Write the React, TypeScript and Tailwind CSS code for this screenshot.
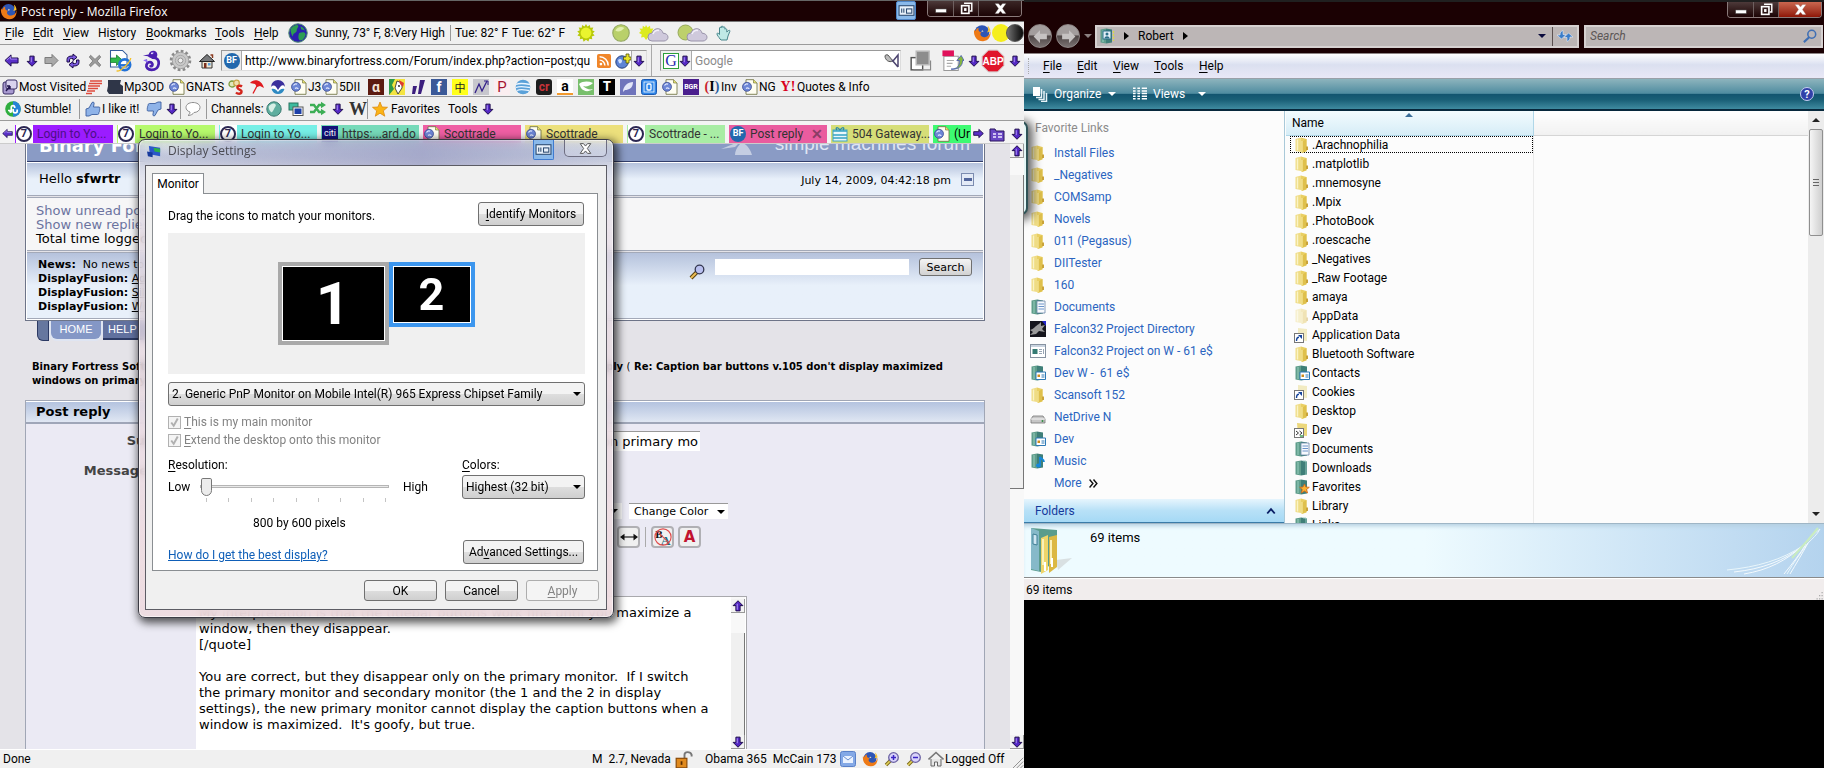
import { useState } from "react";
import type { ReactNode } from "react";

type IconProps = { size?: number; className?: string };

function Svg({ size = 16, className = "", children }: IconProps & { children: ReactNode }) {
  return (
    <svg width={size} height={size} viewBox="0 0 16 16" fill="none" className={`shrink-0 ${className}`} aria-hidden="true">
      {children}
    </svg>
  );
}

// "&File" underlines the F, like a Windows menu caption
function Caption({ text }: { text: string }) {
  const at = text.indexOf("&");
  if (at < 0 || text[at + 1] === " ") return <>{text}</>;
  return (
    <>
      {text.slice(0, at)}
      <span className="underline underline-offset-2">{text[at + 1]}</span>
      {text.slice(at + 2)}
    </>
  );
}

const LeftArrow = ({ size = 15 }: IconProps) => (
  <Svg size={size}>
    <path d="M1 8l6.5-6v3.300H15v5.400H7.500V14z" fill="#5a30c8" stroke="#1c0a4a" />
    <path d="M3 7.500L7 4v2.500h7" stroke="#a58af0" />
  </Svg>
);
const RightArrow = ({ size = 12 }: IconProps) => (
  <Svg size={size}>
    <path d="M15 8L8.500 2v3.300H1v5.400h7.500V14z" fill="#5a30c8" stroke="#1c0a4a" strokeWidth="1.300" />
  </Svg>
);
const GreyArrow = () => (
  <Svg size={15}>
    <path d="M15 8L8.500 1.500v3.300H1v6.400h7.500v3.300z" fill="#a9a9a9" stroke="#777" />
  </Svg>
);
const DownArrow = ({ size = 12 }: IconProps) => (
  <Svg size={size}>
    <path d="M8 15L1.500 8.500h3.700V1.500h5.600v7h3.700z" fill="#5428c4" stroke="#1c0a4a" strokeWidth="1.300" />
    <path d="M7 3v6.500" stroke="#a58af0" strokeWidth="1.500" />
  </Svg>
);
const UpArrow = ({ size = 12 }: IconProps) => (
  <Svg size={size}>
    <path d="M8 1L1.500 7.500h3.700v7h5.600v-7h3.700z" fill="#5428c4" stroke="#1c0a4a" strokeWidth="1.300" />
    <path d="M7 5v8" stroke="#a58af0" strokeWidth="1.500" />
  </Svg>
);
const Reload = () => (
  <Svg>
    <path d="M2 9V6.500C2 4 4 3 7 3h1V1l4 3.300L8 7.500V5.500H6.500C5 5.500 4.500 6 4.500 7v2z" fill="#7b5be0" stroke="#1c0a4a" />
    <path d="M14 7v2.500c0 2.500-2 3.500-5 3.500H8v2l-4-3.300L8 8.500v2h1.500c1.500 0 2-.5 2-1.500V7z" fill="#7b5be0" stroke="#1c0a4a" />
  </Svg>
);
const StopX = () => (
  <Svg size={14}>
    <path d="M3 1.500l5 4.700 5-4.700 1.500 2L10.500 8l4 4.500-1.500 2-5-4.700-5 4.700-1.500-2L5.500 8l-4-4.500z" fill="#9b9b9b" stroke="#7d7d7d" />
  </Svg>
);
const IeTab = () => (
  <Svg size={24}>
    <path d="M1 1h8l3 3v8H1z" fill="#fff" stroke="#345c9c" strokeWidth=".7" />
    <path d="M1 6h4V4l4 3.500L5 11V9H1z" fill="#2fb84a" stroke="#177a2b" strokeWidth=".5" />
    <circle cx="10.500" cy="10.500" r="3.600" stroke="#2272d8" strokeWidth="1.800" />
    <path d="M7 10.700h7" stroke="#2272d8" strokeWidth="1.300" />
    <path d="M5 14.500c2 1 9-5 9.500-8.500" stroke="#f3c12b" strokeWidth=".9" />
  </Svg>
);
const Seahorse = () => (
  <Svg size={23}>
    <path d="M2 4.500l4-.7C6.500 1 10 .3 11.500 2.200c1.200 1.800.3 3.600-1 4.300C9 7.500 6 5.500 5.500 5z" fill="#4a1fb0" />
    <path
      d="M9 6c3 0 4.300 2 4 4.300-.4 2.700-2.500 4.200-5 4.200s-4-1.700-3.500-3.500 2.600-2.500 3.700-1.300.2 2.400-.8 2.200"
      stroke="#4a1fb0"
      strokeWidth="1.900"
      strokeLinecap="round"
    />
    <path d="M5 7.500l-1.500.5 2 1M8.500 2.800l1-.3" stroke="#8c6af0" />
    <circle cx="8.300" cy="3" r=".6" fill="#fff" />
  </Svg>
);
const Gear = () => (
  <Svg size={23}>
    <circle cx="8" cy="8" r="6.600" stroke="#8a8a8a" strokeWidth="1.800" strokeDasharray="1.900 1.550" />
    <circle cx="8" cy="8" r="5.700" fill="#c9c9c9" stroke="#909090" strokeWidth=".5" />
    <circle cx="8" cy="8" r="1.700" fill="#eee" stroke="#888" strokeWidth=".6" />
    <circle cx="8" cy="8" r="3.600" stroke="#a5a5a5" strokeWidth=".6" />
  </Svg>
);
const Home = () => (
  <Svg>
    <path d="M3 8h10v7H3z" fill="#efe6d2" stroke="#333" />
    <path d="M0.500 8.500L8 1.500l7.500 7z" fill="#77797c" stroke="#222" />
    <path d="M11.500 2h2v3" stroke="#8a3b20" strokeWidth="1.500" />
    <path d="M5 10h2.500v5H5z" fill="#7a2f1d" />
    <path d="M9 10h2.500v2.500H9z" fill="#5aa0dd" />
  </Svg>
);
const Globe = ({ size = 20 }: IconProps) => (
  <Svg size={size}>
    <circle cx="8" cy="8" r="7.400" fill="#2a1fae" stroke="#4f8f70" strokeWidth=".8" />
    <path d="M2 5c2-3 5-4 6-3s-1 2-1 4-3 2-3 4-2-2-2-5zM9 8c2-1 5-1 5 1s-2 5-4 5-2-4-1-6z" fill="#2d9d54" />
    <path d="M10 2.500c2 .5 3 2 3.500 3.500l-3-1z" fill="#2d9d54" />
  </Svg>
);
const TealGlobe = () => (
  <Svg>
    <circle cx="8" cy="8" r="7.200" fill="#5fae9f" stroke="#3a7a70" />
    <path d="M3 5c2-2 4-3 6-2s0 3-1 5-2 4-3 3-3-4-2-6z" fill="#d7efe6" />
  </Svg>
);
const Firefox = ({ size = 17 }: IconProps) => (
  <Svg size={size}>
    <circle cx="8" cy="7.500" r="6.500" fill="#2d55b5" />
    <path d="M1 5c-1 6 3 10.500 8 10.300S16 11 15.500 6.500c-.5 3-2 5-5 5.200C7 12 5.500 9 7.500 7.200 5 7 4.500 5 5 3.500 3.500 3.500 2.300 5.500 2 6.500z" fill="#ee7a16" />
    <path d="M15.500 6.500c0-2-1-4-2.500-5 .8 2 .8 4-.5 6z" fill="#f9c22d" />
    <path d="M7.500 7.200l2-.7L8 5.500z" fill="#f8e3c0" />
  </Svg>
);
const Sun = ({ size = 18 }: IconProps) => (
  <Svg size={size}>
    <path
      d="M8 0l1.300 2.300L11.500.8l.3 2.600 2.700-.2-1 2.400 2.300 1.100L14 8.300l1.600 2-2.500.7.500 2.600-2.600-.4-.9 2.400L8 14l-2.100 1.700-.9-2.500-2.600.4.500-2.600L.4 10.300 2 8.300.2 6.700l2.300-1.100-1-2.400 2.700.2.300-2.600 2.200 1.500z"
      fill="#b7c90a"
    />
    <circle cx="8" cy="8" r="4.800" fill="#eaf52e" />
  </Svg>
);
const PaleDisc = () => (
  <Svg size={18}>
    <circle cx="8" cy="8" r="7.300" fill="#b9d06a" stroke="#94a860" />
    <path d="M3 6c1-3 5-4.500 8-2.500-3 3-5 4-8 2.500z" fill="#e2efb0" />
  </Svg>
);
function CloudyIcon({ spiky }: { spiky?: boolean }) {
  return (
    <svg width="31" height="18" viewBox="0 0 31 18" fill="none" aria-hidden="true">
      {spiky ? (
        <path d="M8 1l1.500 2.500L12 1.800l.3 3 3-.2-1.300 3L16 9l-3 1 1 3-3-.5-3 3.500-2-3-3 .5.800-3L1 9l2-2-1.500-2.500 3 .2.300-3 2.200 1.500z" fill="#dcea1e" />
      ) : (
        <circle cx="8.500" cy="8.500" r="7.500" fill="#bdd06c" stroke="#97aa5c" />
      )}
      <path d="M14 17a4 4 0 010-8c1-3 3.500-4.500 6-4.300 3 .2 4.500 2.300 5 4.500 3 0 5 1.800 5 4s-2 3.800-4 3.800z" fill="#cfc9dc" stroke="#9a94ab" />
      <path d="M15 10c1-3 4-4 6-3.500" stroke="#f3f0fa" strokeWidth="1.500" />
    </svg>
  );
}
const Hand = () => (
  <Svg>
    <path d="M4 14c-1-2-3-3.500-3-5s1.500-1 2.500.5V3c0-1 1.700-1 1.700 0V2c0-1.200 1.800-1.200 1.800 0v.5c.2-1 1.900-1 1.900.2v1.500c.4-.8 1.900-.6 1.900.4V7l1.700-1.500c1-.7 1.800.2 1.300 1L12 11l-1 4H5z" fill="#bfe9e6" stroke="#48868c" />
  </Svg>
);

const PageGlobe = () => (
  <Svg>
    <path d="M4 .7h7.500L15 4v11.300H4z" fill="#fffef2" stroke="#77794a" strokeWidth=".9" />
    <path d="M11.500.7V4H15" fill="#e9e36d" stroke="#77794a" strokeWidth=".7" />
    <circle cx="5" cy="7.800" r="4.500" fill="#6d86d6" stroke="#31418a" strokeWidth=".7" />
    <path d="M2.500 6.500c1-1.500 2.500-2 3.500-1.200M4 9.500c1.500-1 3-.5 3 .5" stroke="#e6ecff" strokeWidth="1.200" />
  </Svg>
);
const MostVisited = () => (
  <Svg>
    <rect x="1" y="3" width="11" height="12" rx="2" fill="#a89ad0" stroke="#3a2e66" />
    <rect x="4" y="1" width="11" height="9" rx="2" fill="#d9d3ee" stroke="#3a2e66" />
    <path d="M4 12l4-5m0 0H5m3 0v3" stroke="#22164f" strokeWidth="1.400" />
  </Svg>
);
const RedWaves = () => (
  <Svg>
    <path d="M4 2h12M3 4.500h13M2 7h12M2 9.500h10M1 12h8M0 14.500h6" stroke="#de4a3c" strokeWidth="1.300" />
  </Svg>
);
const DarkBlob = () => (
  <Svg>
    <path d="M1 1h13l-1 4 3 2v8H2l-2-3 1-5z" fill="#2f3648" />
  </Svg>
);
const Scottish = () => (
  <Svg>
    <circle cx="4" cy="5" r="3" fill="#dfe8bd" stroke="#7d9c3c" strokeWidth="1.300" />
    <circle cx="8.500" cy="4" r="2.800" fill="#f0dfae" stroke="#c9a64a" strokeWidth="1.300" />
    <path d="M14 7.500c-2-1.500-5-.5-4.500 1.500s4.500 1.500 4 4-4 2-5.500.5" stroke="#d3251c" strokeWidth="2.400" />
  </Svg>
);
const Umbrella = () => (
  <Svg>
    <path d="M1 4C5-1 13 1 15 9l-4-2-3 1-2-3z" fill="#e01a1f" />
    <path d="M8.500 6L4 14.500" stroke="#e01a1f" strokeWidth="1.300" />
  </Svg>
);
const Noaa = () => (
  <Svg>
    <circle cx="8" cy="8" r="7" fill="#fff" />
    <path d="M1 8A7 7 0 018 1a7 7 0 017 7c-2-3-4-2-7 3-2-4-4-6-7-3z" fill="#3b2f9c" />
    <path d="M1.500 10c3-1 5 1 6.500 3 1.500-2 3.500-4 6.500-3A7 7 0 018 15a7 7 0 01-6.500-5z" fill="#2f8ac2" />
  </Svg>
);
const Face = () => (
  <Svg>
    <rect width="16" height="16" fill="#f4e441" />
    <path d="M0 0h6L3 6l2 4-5 6z" fill="#2f9a48" />
    <path d="M8 2l5 2v5l-4 6-3-6z" fill="#fff" stroke="#222" strokeWidth=".8" />
    <path d="M10 1l5 3-1 4-3-3z" fill="#de3b2f" />
    <circle cx="10" cy="7" r=".9" fill="#111" />
  </Svg>
);
const Slashes = () => (
  <Svg>
    <path d="M3 7h4L5 15H2zM10 1h5l-4 14H8z" fill="#3b1e7d" />
  </Svg>
);
const Spark = () => (
  <Svg>
    <rect width="16" height="16" fill="#c7c7cd" />
    <path d="M2 14L6 5l3 7 5-10" stroke="#33208a" strokeWidth="1.300" />
    <path d="M11 2h4v4" stroke="#33208a" />
  </Svg>
);
const Stripes = () => (
  <Svg>
    <circle cx="8" cy="8" r="7.300" fill="#5aa1d8" />
    <path d="M1 5.500c4-2 9-1 14 0M1 8.500c5-2 9-.5 14 0M2 11.500c4-2 8-.5 12 0" stroke="#eaf5ff" strokeWidth="1.300" />
  </Svg>
);
const GreenLeaf = () => (
  <Svg>
    <rect width="16" height="16" fill="#78bf6c" />
    <path d="M1 5c4-3 9-3 14-1-3 3-7 4-10 3 3 3 7 4 10 3-4 3-9 3-12-1z" fill="#fff" />
  </Svg>
);
const Feather = () => (
  <Svg>
    <rect width="16" height="16" fill="#6f74bb" />
    <path d="M3 13C3 7 8 3 13 3c0 6-4 8-8 8z" fill="#e3e6f8" />
  </Svg>
);
const BlueO = () => (
  <Svg>
    <rect x=".5" y=".5" width="15" height="15" rx="2" fill="#2f86e8" stroke="#1a5ab4" />
    <rect x="3" y="3" width="10" height="10" stroke="#fff" strokeWidth=".8" />
    <rect x="6" y="5" width="4" height="6" rx="1" stroke="#fff" strokeWidth="1.300" />
  </Svg>
);

function Letter({ text, className }: { text: string; className: string }) {
  return <span className={`inline-flex h-4 w-4 shrink-0 items-center justify-center leading-none ${className}`}>{text}</span>;
}

const BinaryFortress = () => (
  <Letter text="BF" className="rounded-full bg-[#2268ad] text-[9px] font-bold text-white" />
);
const Seven = () => (
  <span className="flex h-[18px] w-[17px] shrink-0 items-center bg-white">
    <Letter text="7" className="rounded-full border-2 border-[#2c2752] bg-white text-[11px] font-bold text-[#2c2752]" />
  </span>
);
const Gift = () => (
  <Svg>
    <rect x="1" y="4" width="14" height="11" fill="#e9f7fb" stroke="#3da4bf" />
    <path d="M1 5h14M1 9h14M1 12h14" stroke="#35a2c4" strokeWidth="1.600" />
    <path d="M8 4C5 0 3 2 5 4M8 4c3-4 5-2 3 0" stroke="#2a8aa8" strokeWidth="1.300" />
  </Svg>
);
const Stumble = () => (
  <Svg>
    <circle cx="8" cy="8" r="7.800" fill="#2fae3f" />
    <path d="M8 .2a7.800 7.800 0 010 15.600z" fill="#2683d8" />
    <path d="M3 9.500h2v1c0 .8 1.300.8 1.300 0V6.300C6.300 4 9.700 4 9.700 6.300V7M8.200 8v2c0 2.500 4 2.500 4 0V8.500" stroke="#fff" strokeWidth="1.700" />
  </Svg>
);
function Thumb({ down }: { down?: boolean }) {
  return (
    <Svg className={down ? "rotate-180" : ""}>
      <path d="M1 8l3-1 3-5.500c1.500-1 2.500 0 2 1.500L8.500 6H14c1.300.3 1.300 1.700.3 2 .8.500.7 1.600-.2 1.900.6.600.4 1.600-.4 1.800.4.900-.2 1.800-1.200 1.800H7L4 15l-3 0z" fill="#8fb3e8" stroke="#3c5f9f" strokeWidth=".9" />
    </Svg>
  );
}
const Bubble = () => (
  <Svg>
    <path d="M8 1.500c4 0 7 2 7 5s-3 5-6 5c-1 1.500-3 3-6 3 1.500-1 2-2.500 2-3.500-2.500-.8-4-2.500-4-4.500 0-3 3-5 7-5z" fill="#fff" stroke="#8e8e8e" />
  </Svg>
);
const Photos = () => (
  <Svg>
    <rect x="1" y="2" width="9" height="7" fill="#3dbb9e" stroke="#28735f" />
    <rect x="5" y="6" width="10" height="8.500" fill="#fff" stroke="#555" />
    <rect x="6.500" y="7.500" width="7" height="5.500" fill="#1d3fa8" />
  </Svg>
);
const Shuffle = () => (
  <Svg>
    <path d="M0 4h4l5 7h3M0 11h4l5-7h3" stroke="#3cae55" strokeWidth="2.400" />
    <path d="M11 .8L16 4l-5 3.300zM11 7.800l5 3.300-5 3.200z" fill="#3cae55" />
  </Svg>
);
const Star = ({ size = 16 }: IconProps) => (
  <Svg size={size}>
    <path d="M8 1l2 5 5.500.3-4.200 3.500 1.500 5.400L8 12.200l-4.700 3 1.400-5.400L.5 6.300 6 6z" fill="#fbb416" stroke="#dd8a10" strokeWidth=".8" />
  </Svg>
);
const Rss = () => (
  <Svg size={14}>
    <rect width="16" height="16" rx="2" fill="#f0862a" />
    <circle cx="4.500" cy="11.500" r="1.500" fill="#fff" />
    <path d="M3 7a6 6 0 016 6M3 3.200A9.800 9.800 0 0112.800 13" stroke="#fff" strokeWidth="1.700" />
  </Svg>
);
const GlobePlus = () => (
  <Svg>
    <circle cx="7" cy="9" r="6.200" fill="#5d84d6" stroke="#26407c" />
    <path d="M3 7c2-2 4-1 4 1s-2 3-3 2z" fill="#cfe0ff" />
    <path d="M11 1h3v3h2v3h-2v3h-3V7H8.500V4H11z" fill="#e9e52a" stroke="#55560c" strokeWidth=".8" />
  </Svg>
);
const SearchDish = () => (
  <Svg>
    <path d="M1 3c0 4 4 7 8 5L4 2C2.500 1.500 1 2 1 3z" fill="#bbb" stroke="#555" />
    <path d="M8 7l6 7M9 8l5-6v12" stroke="#4d4570" strokeWidth="1.500" />
  </Svg>
);
const StackIcon = () => (
  <Svg size={23}>
    <rect x="1.500" y="6" width="8" height="8.500" fill="#fff" stroke="#555" />
    <rect x="5" y="1.500" width="9" height="9.500" fill="#8d8d8d" stroke="#bbb" />
    <path d="M3 14.500h12V8" stroke="#888" strokeWidth=".8" />
  </Svg>
);
const SendPage = () => (
  <Svg size={23}>
    <path d="M2 5h10v10H2z" fill="#fff" stroke="#999" strokeWidth=".7" />
    <path d="M1 1h8v4H1z" fill="#e0115a" />
    <path d="M4 8h5M4 10h4M4 12h3" stroke="#aaa" strokeWidth=".7" />
    <path d="M7 14c4 0 6-2 6-6l-2 0 3-3.500L16 8h-1c0 4-3 6.500-8 6z" fill="#86b93c" stroke="#4a5db0" strokeWidth=".6" />
  </Svg>
);
const Abp = () => (
  <svg width="24" height="24" viewBox="0 0 24 24" aria-hidden="true">
    <path d="M7.500 1h9L23 7.500v9L16.500 23h-9L1 16.500v-9z" fill="#e0162b" stroke="#fff" strokeWidth="1" />
    <path d="M7.500 1h9L23 7.500v9L16.500 23h-9L1 16.500v-9z" fill="none" stroke="#9c9c9c" strokeWidth=".5" />
    <text x="12" y="16" textAnchor="middle" fontSize="10" fontWeight="bold" fontFamily="Arial, Liberation Sans, sans-serif" fill="#fff">
      ABP
    </text>
  </svg>
);
const TabGroups = () => (
  <Svg>
    <path d="M1 3h5l1 2h8v10H1z" fill="#6a48c4" stroke="#28125c" />
    <path d="M4 8h3M9 8h4M4 11h3M9 11h4" stroke="#f0eaff" strokeWidth="1.400" />
  </Svg>
);
const ScreenButton = () => (
  <Svg size={17}>
    <rect x="1" y="3.500" width="14" height="9" fill="#e9f2fb" stroke="#2c4a70" />
    <path d="M3.500 6v4M5.500 6v4" stroke="#2c4a70" strokeWidth="1" />
    <rect x="8" y="6.500" width="5" height="4" stroke="#2c4a70" />
  </Svg>
);
const MinGlyph = () => (
  <Svg size={14}>
    <rect x="2" y="8" width="12" height="4" fill="#fff" stroke="#555" strokeWidth=".6" />
  </Svg>
);
const MaxGlyph = () => (
  <Svg size={13}>
    <path d="M5 1.500h9.500V11H12" stroke="#fff" strokeWidth="1.800" />
    <rect x="2" y="4.500" width="9" height="9.500" stroke="#fff" strokeWidth="2" />
    <rect x="5" y="7.500" width="3" height="3.500" fill="#fff" />
  </Svg>
);
function CloseGlyph({ outline }: { outline?: boolean }) {
  return (
    <Svg size={13}>
      <path
        d="M1.500 2h4L8 5l2.500-3h4L10.300 8l4.200 6h-4L8 11l-2.500 3h-4L5.700 8z"
        fill="#fff"
        stroke={outline ? "#555" : "#bbb"}
        strokeWidth={outline ? 1.2 : 0.4}
      />
    </Svg>
  );
}
const Caret = ({ className = "" }: { className?: string }) => (
  <svg width="8" height="4" viewBox="0 0 8 4" className={className} aria-hidden="true">
    <path d="M0 0h8L4 4z" fill="currentColor" />
  </svg>
);
const Crumb = () => (
  <svg width="5" height="8" viewBox="0 0 5 8" className="shrink-0" aria-hidden="true">
    <path d="M0 0l5 4-5 4z" fill="#000" />
  </svg>
);

/* ---- explorer icons ---- */

function Folder({ faded }: { faded?: boolean }) {
  return (
    <Svg className={faded ? "opacity-40" : ""}>
      <path d="M1.500 2L7 .5V15l-5.500-1z" fill="#efdc85" />
      <path d="M7 .5L12.500 2v12.500L8 16l-1-1z" fill="#e9cf63" />
      <path d="M8.500 4.500l4-2.500v12l-4 1.500z" fill="#dfc04c" />
      <path d="M3.500 2.500v11" stroke="#faf3c6" strokeWidth="1.400" />
      <path d="M8 4v11" stroke="#f8eeb0" strokeWidth=".9" />
      <path d="M12 9.500h2V13h-2z" fill="#c9a33a" />
    </Svg>
  );
}
function GreenFolder({ children }: { children?: ReactNode }) {
  return (
    <Svg>
      <path d="M1.500 1.500L7 .5v15l-5.500-1z" fill="#5f9d8b" />
      <path d="M7 .5L13 1.500v13L7 15.500z" fill="#3f7f78" />
      <path d="M4 2v12" stroke="#8cc4b4" strokeWidth="1.300" />
      {children}
    </Svg>
  );
}
const DocFolder = () => (
  <GreenFolder>
    <path d="M7 2h8v12H7z" fill="#f7fafd" stroke="#6b87a8" strokeWidth=".8" />
    <path d="M8.500 5H14M8.500 7.500H14M8.500 10H14" stroke="#5b88c4" strokeWidth=".9" />
  </GreenFolder>
);
const CardFolder = () => (
  <GreenFolder>
    <path d="M6 7h9.500v7.500H6z" fill="#fff" stroke="#2d79b5" />
    <path d="M7.500 9.500h2.500V12H7.500z" fill="#cf8a1c" />
    <path d="M11.500 10h3M11.500 12h3" stroke="#2d79b5" />
  </GreenFolder>
);
const MusicFolder = () => (
  <GreenFolder>
    <path d="M10 12V4c1 2 4 2 4 5" stroke="#1588dc" strokeWidth="1.800" />
    <ellipse cx="8.500" cy="12.500" rx="2.500" ry="2" fill="#1588dc" />
  </GreenFolder>
);
const StarFolder = () => (
  <GreenFolder>
    <path d="M10.500 5l1.300 3 3.500.3-2.700 2.200 1 3.500-3.100-2-3.200 2 1-3.500-2.600-2.200L9 8z" fill="#f9b233" stroke="#d1661b" strokeWidth=".8" />
  </GreenFolder>
);
const PlainGreen = () => (
  <GreenFolder>
    <path d="M9 1h3v14" stroke="#9accc0" strokeWidth=".9" />
  </GreenFolder>
);
const UserFolder = () => (
  <GreenFolder>
    <rect x="4" y="3" width="8" height="8" fill="#e2eef6" stroke="#2b6f88" />
    <circle cx="8" cy="6" r="1.500" fill="#2b6f88" />
    <path d="M5.500 10.500c0-3 5-3 5 0z" fill="#2b6f88" />
    <path d="M14.500 3v10" stroke="#d8d84a" strokeWidth="1.300" strokeDasharray="2 1" />
  </GreenFolder>
);
const LinkedFolder = () => (
  <Svg>
    <path d="M4 1l9 1v12l-9-1z" fill="#f2ebc2" />
    <rect x=".5" y="6.500" width="9" height="9" fill="#fff" stroke="#777" />
    <path d="M2.500 14c0-2.500 1-3.700 2.500-3.700" stroke="#16459c" strokeWidth="1.400" />
    <path d="M4 8h4v4z" fill="#16459c" />
  </Svg>
);
const JunctionFolder = () => (
  <Svg>
    <path d="M3 1l10 1v12l-9-1z" fill="#ecd77b" />
    <rect x=".5" y="6.500" width="9" height="9" fill="#fff" stroke="#777" />
    <path d="M2 9l2.500 2L2 13M5.500 9L8 11l-2.500 2" stroke="#333" />
    <path d="M6 14h3" stroke="#3aa04b" strokeWidth="1.400" />
  </Svg>
);
const Falcon = () => (
  <Svg>
    <rect width="16" height="16" fill="#15151c" />
    <path d="M0 9c4-1 5-4 9-6l2-2v4l4-1-3 4 3 3-6-1-3 3-6 1 3-3z" fill="#9a9a9a" />
    <path d="M12 0h4v5z" fill="#2426cc" />
  </Svg>
);
const AppWindow = () => (
  <Svg>
    <rect x=".5" y="1.500" width="15" height="13" fill="#fff" stroke="#8692a0" />
    <path d="M1 3h14" stroke="#c9d3df" strokeWidth="2" />
    <path d="M2.500 6h5v5h-5z" fill="#347a72" />
    <path d="M9 6.500h3M9 8.500h3M9 10.500h3M13.500 6v5" stroke="#98a6b4" />
  </Svg>
);
const Drive = () => (
  <Svg>
    <path d="M1 10l2-3h10l2 3v4H1z" fill="#c6c6c6" stroke="#777" strokeWidth=".8" />
    <path d="M1 10h14" stroke="#f4f4f4" />
    <circle cx="12.500" cy="12" r="1" fill="#2e8a3f" />
  </Svg>
);

/* ---- firefox ---- */

function WindowButtons({ red }: { red?: boolean }) {
  return (
    <div className="flex h-4 overflow-hidden rounded-b-[4px] border border-t-0 border-[#8a7a7a] text-white">
      <button aria-label="Minimize" className="flex w-[26px] items-center justify-center border-r border-[#6e6060] bg-gradient-to-b from-[#4d3a3a] to-[#1c0506]">
        <MinGlyph />
      </button>
      <button aria-label="Restore" className="flex w-[25px] items-center justify-center border-r border-[#6e6060] bg-gradient-to-b from-[#4d3a3a] to-[#1c0506]">
        <MaxGlyph />
      </button>
      <button
        aria-label="Close"
        className={`flex w-[42px] items-center justify-center bg-gradient-to-b ${red ? "from-[#c9664f] to-[#8f1405]" : "from-[#3a2626] to-[#1c0506]"}`}
      >
        <CloseGlyph />
      </button>
    </div>
  );
}

const firefoxMenu = [
  { label: "&File", width: "w-[28px]" },
  { label: "&Edit", width: "w-[30px]" },
  { label: "&View", width: "w-[35px]" },
  { label: "Hi&story", width: "w-[48px]" },
  { label: "&Bookmarks", width: "w-[69px]" },
  { label: "&Tools", width: "w-[39px]" },
  { label: "&Help", width: "w-[34px]" },
];

function FirefoxMenu() {
  return (
    <div className="flex h-[23px] shrink-0 items-center border-b border-[#9b9b9b] bg-[#f0f0f0] pl-[5px]">
      {firefoxMenu.map((m) => (
        <button key={m.label} className={`${m.width} shrink-0 text-left`}>
          <Caption text={m.label} />
        </button>
      ))}
      <Globe />
      <span className="ml-[7px] w-[136px] shrink-0 border-r border-[#999]">Sunny, 73° F, 8:Very High</span>
      <span className="ml-1 w-[57px] shrink-0">Tue: 82° F</span>
      <span className="w-[65px] shrink-0">Tue: 62° F</span>
      <Sun />
      <div className="ml-[17px] flex items-center gap-2">
        <PaleDisc />
        <CloudyIcon spiky />
        <CloudyIcon />
        <Hand />
      </div>
      <div className="ml-auto flex items-center">
        <Firefox size={18} />
        <span className="ml-px h-[18px] w-[18px] rounded-full bg-[#f5ee1c]" />
        <span className="-ml-1 h-[18px] w-[18px] rounded-full border border-[#555] bg-gradient-to-r from-[#777] to-[#0a0a0a]" />
      </div>
    </div>
  );
}

const navButtons = [
  { name: "Back", width: "w-[22px]", icon: <LeftArrow /> },
  { name: "History list", width: "w-[18px]", icon: <DownArrow /> },
  { name: "Forward", width: "w-[21px]", icon: <GreyArrow /> },
  { name: "Reload", width: "w-[23px]", icon: <Reload /> },
  { name: "Stop", width: "w-[21px]", icon: <StopX /> },
  { name: "IE Tab", width: "w-[31px]", icon: <IeTab /> },
  { name: "SeaMonkey", width: "w-[29px]", icon: <Seahorse /> },
  { name: "Options", width: "w-[30px]", icon: <Gear /> },
  { name: "Home", width: "w-[22px]", icon: <Home /> },
];

function NavBar() {
  const [url, setUrl] = useState("http://www.binaryfortress.com/Forum/index.php?action=post;qu");
  return (
    <div className="flex h-8 shrink-0 items-center border-b border-[#9b9b9b] bg-[#f0f0f0] pl-1">
      {navButtons.map((b) => (
        <button key={b.name} aria-label={b.name} className={`${b.width} shrink-0`}>
          {b.icon}
        </button>
      ))}
      <div className="flex h-[21px] min-w-0 flex-1 items-center border border-[#999] border-b-[#ddd] border-r-[#ddd] bg-white">
        <span className="flex h-full w-5 shrink-0 items-center justify-center border-r border-[#aaa] bg-[#ececec]">
          <BinaryFortress />
        </span>
        <input aria-label="Address" value={url} onChange={(e) => setUrl(e.target.value)} className="min-w-0 flex-1 pl-[3px] outline-none" />
        <span className="flex h-full items-center gap-1 pl-1">
          <Rss />
          <GlobePlus />
        </span>
        <span className="flex h-full w-[15px] shrink-0 items-center justify-center border-l border-[#aaa] bg-[#f0f0f0]">
          <DownArrow />
        </span>
      </div>
      <span className="ml-1 h-full w-[9px] shrink-0 border-l border-[#aaa]" />
      <div className="flex h-[21px] w-[241px] shrink-0 items-center border border-[#999] border-b-[#ddd] border-r-[#ddd] bg-white">
        <span className="flex h-full w-[31px] shrink-0 items-center border-r border-[#aaa] bg-[#f0f0f0] pl-0.5">
          <Letter text="G" className="border border-[#2e9f3a] bg-white font-['Liberation_Serif',serif] text-[16px] text-[#2b2bb0]" />
          <DownArrow />
        </span>
        <input aria-label="Web search" placeholder="Google" className="min-w-0 flex-1 pl-[3px] outline-none placeholder:text-[#8b8b8b]" />
        <SearchDish />
      </div>
      <div className="flex w-[123px] shrink-0 items-center pl-2">
        <span className="w-8"><StackIcon /></span>
        <span className="w-[27px]"><SendPage /></span>
        <span className="w-[13px]"><DownArrow /></span>
        <span className="w-7"><Abp /></span>
        <DownArrow />
      </div>
    </div>
  );
}

const bookmarks: { icon: ReactNode; label?: string; width?: string }[] = [
  { icon: <MostVisited />, label: "Most Visited", width: "w-[79px]" },
  { icon: <RedWaves /> },
  { icon: <DarkBlob />, label: "Mp3OD", width: "w-[57px]" },
  { icon: <PageGlobe />, label: "GNATS", width: "w-[54px]" },
  { icon: <Scottish /> },
  { icon: <Umbrella /> },
  { icon: <Noaa /> },
  { icon: <PageGlobe />, label: "J3", width: "w-[26px]" },
  { icon: <PageGlobe />, label: "5DII", width: "w-[41px]" },
  { icon: <Letter text="α" className="bg-[#5c1a10] text-[14px] font-bold text-[#f3e3d8]" /> },
  { icon: <Face /> },
  { icon: <Slashes /> },
  { icon: <Letter text="f" className="bg-[#3b5998] text-[14px] font-bold text-white" /> },
  { icon: <Letter text="中" className="bg-[#ffff1a] font-['Noto_Sans_CJK_SC',sans-serif] text-[11px] text-[#222]" /> },
  { icon: <Spark /> },
  { icon: <Letter text="P" className="bg-[#fbeef0] text-[15px] text-[#a51430]" /> },
  { icon: <Stripes /> },
  { icon: <Letter text="cr" className="rounded-[3px] bg-[#1d1d1d] text-[12px] font-bold text-[#c8343a]" /> },
  { icon: <Letter text="a" className="border-b-2 border-[#f29a2e] bg-white text-[14px] font-bold text-black" /> },
  { icon: <GreenLeaf /> },
  { icon: <Letter text="T" className="bg-black font-['Liberation_Mono',monospace] text-[14px] font-bold text-white" /> },
  { icon: <Feather /> },
  { icon: <BlueO /> },
  { icon: <PageGlobe /> },
  { icon: <Letter text="BGR" className="bg-[#4b1f8e] text-[7px] font-bold text-white" /> },
  {
    icon: (
      <span className="flex w-4 justify-center font-['Liberation_Serif',serif] text-[14px] font-bold leading-4">
        <span className="text-[#c9202c]">(</span>I<span className="text-[#2a5c9e]">)</span>
      </span>
    ),
    label: "Inv",
    width: "w-[33px]",
  },
  { icon: <PageGlobe />, label: "NG", width: "w-[33px]" },
  { icon: <Letter text="Y!" className="font-['Liberation_Serif',serif] text-[14px] font-bold text-[#d8001d]" />, label: "Quotes & Info", width: "w-[94px]" },
];

function BookmarksBar() {
  return (
    <nav className="flex h-5 shrink-0 items-center gap-[5px] border-b border-[#9b9b9b] bg-[#f0f0f0] pl-[2px] pt-px">
      {bookmarks.map((b, i) => (
        <a key={i} href="#bookmark" className={`flex h-4 shrink-0 items-center gap-px whitespace-nowrap ${b.width ?? "w-4"}`}>
          {b.icon}
          {b.label}
        </a>
      ))}
    </nav>
  );
}

const Divider = () => <span className="h-5 w-px shrink-0 bg-[#999]" />;

function StumbleBar() {
  return (
    <div className="flex h-6 shrink-0 items-center border-b border-[#9b9b9b] bg-[#f0f0f0] pl-[5px] pt-px">
      <button className="flex w-[74px] shrink-0 items-center gap-[3px]"><Stumble />Stumble!</button>
      <Divider />
      <button className="ml-[5px] flex w-[61px] shrink-0 items-center gap-px"><Thumb />I like it!</button>
      <button aria-label="Dislike" className="w-5 shrink-0"><Thumb down /></button>
      <DownArrow />
      <span className="w-[2px]" />
      <Divider />
      <button aria-label="Reviews" className="w-[25px] shrink-0 pl-1"><Bubble /></button>
      <Divider />
      <span className="w-[59px] shrink-0 pl-1">Channels:</span>
      <div className="flex w-[101px] shrink-0 items-center gap-[6px]">
        <TealGlobe />
        <Photos />
        <Shuffle />
        <DownArrow />
        <Letter text="W" className="font-['Liberation_Serif',serif] text-[18px] font-bold text-[#333]" />
      </div>
      <Divider />
      <button className="ml-1 flex w-[76px] shrink-0 items-center gap-[3px]"><Star />Favorites</button>
      <button className="flex items-center gap-[5px]">Tools<DownArrow /></button>
    </div>
  );
}

const tabs: { title: string; icon: ReactNode; color: string; text?: string }[] = [
  { title: "Login to Yo...", icon: <Seven />, color: "bg-[#9b1cff]", text: "text-[#4b0f85]" },
  { title: "Login to Yo...", icon: <Seven />, color: "bg-[#b6f96c]" },
  { title: "Login to Yo...", icon: <Seven />, color: "bg-[#76efe6]" },
  { title: "https:...ard.do", icon: <Letter text="citi" className="bg-[#12127a] text-[9px] text-white" />, color: "bg-[#76dab9]" },
  { title: "Scottrade", icon: <PageGlobe />, color: "bg-[#ef5fa4]" },
  { title: "Scottrade", icon: <PageGlobe />, color: "bg-[#ece07c]" },
  { title: "Scottrade - ...", icon: <Seven />, color: "bg-[#a8eda4]" },
  { title: "Post reply", icon: <BinaryFortress />, color: "bg-[#ea5c9f]" },
  { title: "504 Gateway...", icon: <Gift />, color: "bg-[#d6de78]" },
];

function TabStrip() {
  return (
    <div className="flex h-[23px] shrink-0 items-center border-b border-[#ccc] bg-[#f4f4f4] pl-[2px] pt-[3px]">
      <span className="w-[13px] shrink-0"><LeftArrow size={11} /></span>
      <div className="flex min-w-0 flex-1 gap-1 overflow-hidden">
        {tabs.map((t, i) => (
          <button key={i} className={`flex h-[18px] w-[98px] shrink-0 items-center gap-1 pl-px ${t.color} ${t.text ?? "text-[#333]"}`}>
            {t.icon}
            <span className="whitespace-nowrap">{t.title}</span>
            {t.title === "Post reply" && <span className="ml-auto pr-1 text-[14px] font-bold text-[#8b3d66]">✕</span>}
          </button>
        ))}
        <button className="flex h-[18px] min-w-0 flex-1 items-center gap-1 overflow-hidden bg-[#3dfa72] pl-px">
          <PageGlobe />
          (Ur
        </button>
      </div>
      <div className="flex w-[53px] shrink-0 items-center pl-[2px]">
        <span className="w-[16px]"><RightArrow size={11} /></span>
        <span className="w-[22px]"><TabGroups /></span>
        <DownArrow />
      </div>
    </div>
  );
}

function ScrollArrow({ up }: { up?: boolean }) {
  return (
    <button aria-label={up ? "Scroll up" : "Scroll down"} className="flex h-[14px] w-full shrink-0 items-center justify-center border-b border-r border-[#999] bg-[#f3f3f3]">
      {up ? <UpArrow /> : <DownArrow />}
    </button>
  );
}

function ForumHeader() {
  return (
    <section className="border border-t-0 border-[#6d7488]">
      <div className="border-x border-white">
        <div className="flex h-[18px] items-end justify-between overflow-hidden border-b border-[#323e6b] bg-[#8a9bc5] pb-1 pl-3 pr-[13px] leading-[22px]">
          <h1 className="text-[18px] font-bold text-white">Binary Fortress</h1>
          <span className="flex items-end gap-[22px] pb-0.5 font-[Arial,'Liberation_Sans',sans-serif] text-[19px] text-[#dfe5f4]">
            <svg width="32" height="16" viewBox="0 0 32 16" className="opacity-50" aria-hidden="true">
              <path d="M0 10L20 2l-6 6zM20 4c6 0 10 8 11 12H14c0-4 2-8 6-12z" fill="#fff" />
            </svg>
            simple machines forum
          </span>
        </div>
        <div className="flex h-[33px] items-center justify-between border-t border-white bg-gradient-to-b from-[#b5c2dc] to-[#e8f0fa] to-50% pl-3 pr-[9px]">
          <span className="text-[13px]">
            Hello <b>sfwrtr</b>
          </span>
          <span className="flex items-center gap-[10px] text-[11px]">
            <time className="pt-1">July 14, 2009, 04:42:18 pm</time>
            <button aria-label="Collapse header" className="flex h-[13px] w-[13px] items-center justify-center border border-[#7c8cb0] bg-[#e3eaf6]">
              <span className="h-[3px] w-2 bg-[#52669c]" />
            </button>
          </span>
        </div>
        <div className="border-y border-[#a3a9b8] py-px">
          <div className="h-[54px] border-y border-[#a3a9b8] bg-[#f6f6f7] pl-[9px] pt-1.5 text-[13px] leading-[14px]">
            <a href="#unread" className="block w-fit text-[#6b739f]">Show unread posts</a>
            <a href="#replies" className="block w-fit text-[#6b739f]">Show new replies</a>
            <span>Total time logged in</span>
          </div>
        </div>
        <div className="flex h-[65px] justify-between bg-gradient-to-b from-[#b5c2dc] to-[#e8f0fa] to-50% pl-[11px] pr-[11px] pt-[5px]">
          <div className="text-[11px] leading-[14px]">
            <p>
              <b>News:</b>&nbsp; No news to
            </p>
            {["Add", "Silent", "What's"].map((n) => (
              <p key={n}>
                <b>DisplayFusion:</b> <a href="#news" className="underline">{n}</a>
              </p>
            ))}
          </div>
          <form className="flex items-start gap-[10px]" onSubmit={(e) => e.preventDefault()}>
            <Svg className="mt-1.5">
              <path d="M2 14l6-6" stroke="#5b430e" strokeWidth="4" />
              <path d="M2 14l6-6" stroke="#edbe55" strokeWidth="2" />
              <circle cx="10.500" cy="5.500" r="4.300" fill="#b9c0ef" stroke="#33364f" strokeWidth="1.300" />
            </Svg>
            <input aria-label="Search forum" className="mt-px h-4 w-[194px] bg-white outline-none" />
            <button className="h-[18px] w-[53px] rounded-[3px] border border-[#707070] bg-gradient-to-b from-[#f4f4f4] to-[#d2d2d2] text-[11px] leading-none">
              Search
            </button>
          </form>
        </div>
        <div className="h-0.5 border-t border-[#a3a9b8] bg-white" />
      </div>
    </section>
  );
}

function PostForm() {
  const [message, setMessage] = useState(
    [
      "My interpretation is that the titlebar buttons work fine until you maximize a",
      "window, then they disappear.",
      "[/quote]",
      "",
      "You are correct, but they disappear only on the primary monitor.  If I switch",
      "the primary monitor and secondary monitor (the 1 and the 2 in display",
      "settings), the new primary monitor cannot display the caption buttons when a",
      "window is maximized.  It's goofy, but true.",
    ].join("\n"),
  );
  const tool = "flex h-[22px] w-[23px] items-center justify-center rounded-[4px] border-2 border-[#b0b0b4] bg-[#f0f0f0] font-bold";
  return (
    <section className="mt-3 flex min-h-0 flex-1 flex-col border border-b-0 border-[#a0a6b5] bg-[#ebeaf4]">
      <h2 className="flex h-[23px] shrink-0 items-center border-b-2 border-t border-b-[#9fa6b8] border-t-white bg-gradient-to-b from-[#b4c3df] to-[#e0e7f3] pl-[10px] text-[13px] font-bold">
        Post reply
      </h2>
      <div className="grid shrink-0 grid-cols-[170px_1fr] pt-[7px] text-[13px]">
        <label htmlFor="subject" className="pr-[9px] pt-0.5 text-right font-bold text-[#444]">Subject:</label>
        <input
          id="subject"
          defaultValue="Re: Caption bar buttons v.105 don't display windows on primary mo"
          className="h-5 w-[504px] border-t border-[#999] bg-white px-0.5 text-right outline-none"
        />
        <label htmlFor="message" className="pr-2 pt-3 text-right font-bold text-[#444]">Message icon:</label>
      </div>
      <div className="mt-6 flex shrink-0 justify-end gap-[7px] pr-[256px] text-[11px]">
        <label className="relative flex items-center">
          <select aria-label="Font size" className="h-4 w-[100px] appearance-none bg-white px-1"><option>Font Size</option></select>
          <Caret className="absolute right-1" />
        </label>
        <label className="relative flex items-center">
          <select aria-label="Font color" className="h-4 w-[99px] appearance-none border-t border-[#999] bg-white pl-[5px] leading-none"><option>Change Color</option></select>
          <Caret className="absolute right-[3px] top-[7px]" />
        </label>
      </div>
      <div className="mt-[7px] flex shrink-0 items-center justify-end gap-[4px] pr-[283px]">
        <button aria-label="Horizontal rule" className={tool}>
          <Svg size={18}>
            <path d="M2 8h12" stroke="#111" />
            <path d="M0 8l4-3v6zM16 8l-4-3v6z" fill="#111" />
          </Svg>
        </button>
        <span className="mx-px h-5 w-px bg-[#aaa]" />
        <button aria-label="Remove formatting" className={tool}>
          <Svg size={18}>
            <text x="1" y="9" fontSize="10" fontWeight="bold" fontFamily="Liberation Serif, serif" fill="#111">B</text>
            <text x="6" y="15" fontSize="12" fontWeight="bold" fontFamily="Liberation Serif, serif" fill="#1b6d7a">A</text>
            <circle cx="8" cy="8" r="7.200" stroke="#e04a4a" />
            <path d="M3 3l10 10" stroke="#e04a4a" />
          </Svg>
        </button>
        <button aria-label="Toggle view" className={`${tool} text-[15px] text-[#c2142f]`}>A</button>
      </div>
      <div className="ml-[170px] mt-12 flex min-h-0 w-[551px] flex-1 border-r border-t border-[#a9a9ad] bg-white">
        <textarea
          id="message"
          value={message}
          onChange={(e) => setMessage(e.target.value)}
          className="min-w-0 flex-1 resize-none overflow-hidden pl-[3px] pt-2 text-[13px] leading-4 outline-none"
        />
        <div className="flex w-[14px] shrink-0 flex-col bg-[#f8f8f8] pt-0.5">
          <ScrollArrow up />
          <div className="mt-5 flex-1 border-r border-[#777] bg-[#f0f0f0]" />
          <ScrollArrow />
        </div>
        <span className="w-px" />
      </div>
    </section>
  );
}

function ForumPage() {
  return (
    <div className="flex min-h-0 flex-1 bg-[#e4e3e8] font-['DejaVu_Sans',sans-serif] text-black">
      <main className="flex min-w-0 flex-1 flex-col overflow-hidden px-[25px]">
        <ForumHeader />
        <nav className="ml-3 flex h-[20px] shrink-0 font-[Arial,'Liberation_Sans',sans-serif] text-[11px] leading-[16px] text-white">
          <span className="w-3 rounded-bl-[6px] border border-t-0 border-[#2c3a64] bg-[#66779f]" />
          <a href="#home" className="w-[54px] rounded-b-[8px] border-2 border-t-0 border-[#dfe5f2] bg-[#8497c6] text-center">HOME</a>
          <a href="#help" className="h-[19px] w-[180px] border-b-2 border-[#2c3a64] bg-[#61719f] pl-[5px]">HELP</a>
        </nav>
        <div className="mt-[19px] pl-[7px] pr-[42px] text-[10px] font-bold leading-[14px]">
          <div className="flex justify-between whitespace-nowrap">
            <span>Binary Fortress Software</span>
            <span>
              Post reply <span className="font-normal">(</span> Re: Caption bar buttons v.105 don't display maximized
            </span>
          </div>
          windows on primary
        </div>
        <PostForm />
      </main>
      <div className="flex w-[14px] shrink-0 flex-col bg-[#f8f8f8]">
        <ScrollArrow up />
        <div className="mt-[17px] h-[314px] border-b border-r border-[#777] bg-[#f0f0f0]" />
        <span className="flex-1" />
        <ScrollArrow />
      </div>
    </div>
  );
}

function Magnifier({ plus }: { plus?: boolean }) {
  return (
    <Svg>
      <path d="M2 14l5-5" stroke="#7a6a1a" strokeWidth="3.500" />
      <path d="M2 14l5-5" stroke="#e6d35c" strokeWidth="1.500" />
      <circle cx="9.500" cy="6.500" r="4.800" fill="#d9d3fa" stroke="#6b62a3" strokeWidth="1.300" />
      <path d={plus ? "M7 6.500h5M9.500 4v5" : "M7 6.500h5"} stroke="#3a24c4" strokeWidth="1.500" />
    </Svg>
  );
}

function StatusBar() {
  return (
    <footer className="flex h-[19px] shrink-0 items-center border-t border-white bg-[#f0f0f0] pl-[3px]">
      <span>Done</span>
      <div className="ml-auto flex items-center whitespace-pre">
        <span className="w-[83px]">M  2.7, Nevada</span>
        <span className="w-[30px]">
          <Svg size={19}>
            <path d="M8 7V4c0-3 5-3 6 0v1.500" stroke="#777" strokeWidth="1.600" />
            <rect x="1" y="7" width="9" height="8" fill="#e08a1e" stroke="#8a4a08" />
            <path d="M5.500 9.500v3" stroke="#5a2d00" strokeWidth="1.500" />
          </Svg>
        </span>
        <span className="w-[135px]">Obama 365  McCain 173</span>
        <div className="flex gap-[6px]">
          <Svg>
            <rect x=".5" y=".5" width="15" height="15" rx="2" fill="#84a9e6" stroke="#5a81c8" />
            <path d="M3 5h10v7H3z" fill="#eaf2ff" />
            <path d="M3 5l5 4 5-4" stroke="#6a8fd0" />
          </Svg>
          <Firefox size={16} />
          <Magnifier plus />
          <Magnifier />
          <Svg>
            <path d="M3 8v7h3.500v-4h3v4H13V8" fill="#e6e6e6" stroke="#666" />
            <path d="M.5 8.500L8 1.500l7.500 7" stroke="#777" strokeWidth="1.600" />
          </Svg>
        </div>
        <span className="ml-px w-[67px]">Logged Off</span>
        <Svg size={12} className="self-end">
          <path d="M1 15L15 1M6 15l9-9M11 15l4-4" stroke="#888" strokeWidth="1.200" />
        </Svg>
      </div>
    </footer>
  );
}

function FirefoxWindow() {
  return (
    <div className="flex h-full min-w-0 flex-col overflow-hidden whitespace-nowrap bg-[#f0f0f0]">
      <header className="flex h-[22px] shrink-0 items-center border-b border-t border-b-[#777] border-t-[#666] bg-[#1b0103] text-white">
        <Firefox />
        <span className="ml-1 pt-px font-['Open_Sans',sans-serif]">Post reply - Mozilla Firefox</span>
        <div className="ml-auto flex items-start gap-[11px] self-start pr-0.5">
          <button aria-label="Move to other monitor" className="flex h-[19px] w-5 items-center justify-center rounded-[2px] border border-[#4f86c8] bg-[#8ab9ea]">
            <ScreenButton />
          </button>
          <WindowButtons />
        </div>
      </header>
      <FirefoxMenu />
      <NavBar />
      <BookmarksBar />
      <StumbleBar />
      <TabStrip />
      <ForumPage />
      <StatusBar />
    </div>
  );
}

/* ---- display settings ---- */

function PushButton({ label, className = "", disabled }: { label: string; className?: string; disabled?: boolean }) {
  const look = disabled
    ? "border-[#adadad] bg-[#f4f4f4] text-[#838383]"
    : "border-[#707070] bg-linear-to-b from-[#f3f3f3] from-50% via-[#dedede] via-50% to-[#cfcfcf]";
  return (
    <button disabled={disabled} className={`rounded-[3px] border ${look} ${className}`}>
      <Caption text={label} />
    </button>
  );
}

function Dropdown({ value, label, className = "" }: { value: string; label: string; className?: string }) {
  return (
    <div className={`relative flex items-center ${className}`}>
      <select
        aria-label={label}
        className="h-6 w-full appearance-none rounded-[3px] border border-[#707070] bg-linear-to-b from-[#f3f3f3] from-50% via-[#dedede] via-50% to-[#cfcfcf] pl-[3px] outline-none"
      >
        <option>{value}</option>
      </select>
      <Caret className="pointer-events-none absolute right-1" />
    </div>
  );
}

function GreyCheck({ label }: { label: string }) {
  return (
    <label className="flex h-[18px] items-center gap-[3px] text-[#838383]">
      <span className="relative flex h-[13px] w-[13px]">
        <input type="checkbox" defaultChecked disabled className="h-[13px] w-[13px] appearance-none border border-[#b1b1b1] bg-[#f4f4f4]" />
        <Svg size={13} className="absolute">
          <path d="M4 8l3 4 5-9" stroke="#b0b0b0" strokeWidth="2.400" />
        </Svg>
      </span>
      <span><Caption text={label} /></span>
    </label>
  );
}

function DisplaySettings() {
  const [res, setRes] = useState(0);
  return (
    <div
      role="dialog"
      aria-label="Display Settings"
      className="absolute left-[138px] top-[139px] w-[476px] rounded-[7px] border border-[#3b3b44] bg-linear-to-b from-[#dfe2ea]/60 via-[#e6dbe4]/70 via-20% to-[#eed9dd]/85 px-[6px] pb-[7px] shadow-[2px_3px_9px_2px_rgba(0,0,0,0.65),inset_0_0_0_1px_rgba(255,255,255,0.6)] backdrop-blur-[4px]"
    >
      <header className="flex h-[25px] items-center bg-linear-to-r from-transparent via-[#9496bf]/60 via-60% to-transparent pb-[3px] text-[#4a4a52]">
        <Svg size={15} className="ml-0.5">
          <path d="M2 2l12 2v9L3 11z" fill="#2b57c9" />
          <path d="M7 4l7 1v4L8 8z" fill="#2db04a" />
          <path d="M0 8l6 1v5l-5-1z" fill="#173a9c" />
        </Svg>
        <span className="ml-[6px] font-['Open_Sans',sans-serif]">Display Settings</span>
        <div className="ml-auto flex items-start gap-[10px] self-start">
          <button aria-label="Move to other monitor" className="flex h-5 w-[21px] items-center justify-center rounded-b-[2px] border border-t-0 border-[#3f7bd0] bg-[#8ab9ea]">
            <ScreenButton />
          </button>
          <button aria-label="Close" className="flex h-[17px] w-[43px] items-center justify-center rounded-b-[5px] border border-t-0 border-[#6d6d80] bg-white/20">
            <CloseGlyph outline />
          </button>
        </div>
      </header>
      <div className="border border-[#5c5c64] bg-[#f0f0f0] pb-2 pl-[6px] pt-[7px]">
        <div role="tablist">
          <button role="tab" aria-selected="true" className="relative -mb-px h-[21px] w-[52px] border border-b-0 border-[#8a8e92] bg-white">
            Monitor
          </button>
        </div>
        <div className="mr-[8px] border border-[#8a8e92] bg-white pb-[6px] pl-[15px] pr-3 pt-2">
          <div className="flex items-center justify-between pr-px">
            <span className="pt-1">Drag the icons to match your monitors.</span>
            <PushButton label="&Identify Monitors" className="h-6 w-[106px]" />
          </div>
          <div className="mt-[7px] flex h-[141px] items-start justify-center bg-[#f0f0f0] pr-px pt-[29px] text-white">
            <button className="h-[83px] w-[111px] border-4 border-[#a9a9a9] bg-white p-px">
              <span className="flex h-full items-center justify-center bg-black text-[60px] font-bold leading-none">1</span>
            </button>
            <button className="h-[65px] w-[86px] border-4 border-[#3c96ee] bg-white p-px">
              <span className="flex h-full items-center justify-center bg-black text-[45px] font-bold leading-none">2</span>
            </button>
          </div>
          <Dropdown label="Monitor" value="2. Generic PnP Monitor on Mobile Intel(R) 965 Express Chipset Family" className="mt-2" />
          <div className="mt-[7px]">
            <GreyCheck label="&This is my main monitor" />
            <GreyCheck label="&Extend the desktop onto this monitor" />
          </div>
          <div className="mt-2 flex justify-between">
            <div>
              <label htmlFor="resolution" className="block h-4 leading-4"><Caption text="&Resolution:" /></label>
              <div className="mt-[2px] flex h-[23px] items-center">
                <span className="w-[32px]">Low</span>
                <input
                  id="resolution"
                  type="range"
                  min={0}
                  max={8}
                  value={res}
                  onChange={(e) => setRes(Number(e.target.value))}
                  className="h-[19px] w-[189px] appearance-none bg-transparent [&::-webkit-slider-runnable-track]:h-[3px] [&::-webkit-slider-runnable-track]:border [&::-webkit-slider-runnable-track]:border-[#b5b5b5] [&::-webkit-slider-runnable-track]:bg-[#e8e8e8] [&::-webkit-slider-thumb]:-mt-2 [&::-webkit-slider-thumb]:h-[18px] [&::-webkit-slider-thumb]:w-[11px] [&::-webkit-slider-thumb]:appearance-none [&::-webkit-slider-thumb]:rounded-[2px] [&::-webkit-slider-thumb]:rounded-b-[6px] [&::-webkit-slider-thumb]:border [&::-webkit-slider-thumb]:border-[#777] [&::-webkit-slider-thumb]:bg-[#ececec]"
                />
                <span className="ml-[14px]">High</span>
              </div>
              <div className="ml-[38px] flex h-1 w-[180px] justify-between">
                {Array.from({ length: 9 }, (_, i) => (
                  <span key={i} className="w-px bg-[#c4c4c4]" />
                ))}
              </div>
              <output className="mt-[13px] block h-4 pl-[85px] leading-4">800 by 600 pixels</output>
            </div>
            <div className="w-[123px]">
              <span className="block h-4 leading-4"><Caption text="&Colors:" /></span>
              <Dropdown label="Colors" value="Highest (32 bit)" className="mt-[2px]" />
            </div>
          </div>
          <div className="mt-[9px] flex items-center justify-between pr-px">
            <a href="#help" className="pt-[6px] text-[#0f5fb8] underline">How do I get the best display?</a>
            <PushButton label="Ad&vanced Settings..." className="h-6 w-[121px]" />
          </div>
        </div>
        <div className="mt-[9px] flex justify-end gap-2 pr-[7px]">
          <PushButton label="OK" className="h-[21px] w-[73px]" />
          <PushButton label="Cancel" className="h-[21px] w-[73px]" />
          <PushButton label="&Apply" className="h-[21px] w-[73px]" disabled />
        </div>
      </div>
    </div>
  );
}

/* ---- explorer ---- */

const favorites = [
  { name: "Install Files", icon: <Folder /> },
  { name: "_Negatives", icon: <Folder /> },
  { name: "COMSamp", icon: <Folder /> },
  { name: "Novels", icon: <Folder /> },
  { name: "011 (Pegasus)", icon: <Folder /> },
  { name: "DIITester", icon: <Folder /> },
  { name: "160", icon: <Folder /> },
  { name: "Documents", icon: <DocFolder /> },
  { name: "Falcon32 Project Directory", icon: <Falcon /> },
  { name: "Falcon32 Project on W - 61 e$", icon: <AppWindow /> },
  { name: "Dev W -  61 e$", icon: <CardFolder /> },
  { name: "Scansoft 152", icon: <Folder /> },
  { name: "NetDrive N", icon: <Drive /> },
  { name: "Dev", icon: <CardFolder /> },
  { name: "Music", icon: <MusicFolder /> },
];

const files = [
  { name: ".Arachnophilia", icon: <Folder /> },
  { name: ".matplotlib", icon: <Folder /> },
  { name: ".mnemosyne", icon: <Folder /> },
  { name: ".Mpix", icon: <Folder /> },
  { name: ".PhotoBook", icon: <Folder /> },
  { name: ".roescache", icon: <Folder /> },
  { name: "_Negatives", icon: <Folder /> },
  { name: "_Raw Footage", icon: <Folder /> },
  { name: "amaya", icon: <Folder /> },
  { name: "AppData", icon: <Folder faded /> },
  { name: "Application Data", icon: <LinkedFolder /> },
  { name: "Bluetooth Software", icon: <Folder /> },
  { name: "Contacts", icon: <CardFolder /> },
  { name: "Cookies", icon: <LinkedFolder /> },
  { name: "Desktop", icon: <Folder /> },
  { name: "Dev", icon: <JunctionFolder /> },
  { name: "Documents", icon: <DocFolder /> },
  { name: "Downloads", icon: <PlainGreen /> },
  { name: "Favorites", icon: <StarFolder /> },
  { name: "Library", icon: <Folder /> },
  { name: "Links", icon: <PlainGreen /> },
];

function NavCircle({ forward }: { forward?: boolean }) {
  return (
    <button
      aria-label={forward ? "Forward" : "Back"}
      className="flex h-6 w-6 items-center justify-center rounded-full border border-[#8d8585] bg-linear-to-b from-[#a39d9d] from-45% via-[#4d4444] via-50% to-[#7c7474]"
    >
      <Svg size={17} className={forward ? "rotate-180" : ""}>
        <path d="M1.500 8l6-6v3.500H14v5H7.500V14z" fill="#c6c2c2" />
      </Svg>
    </button>
  );
}

function ExplorerHeader() {
  return (
    <header className="h-[54px] shrink-0 border-b border-t-2 border-b-[#8c8484] border-t-[#202020] bg-[#1b0103]">
      <div className="flex h-[22px] justify-end pr-[2px]">
        <WindowButtons red />
      </div>
      <div className="flex h-6 items-center pl-1">
        <NavCircle />
        <span className="w-1" />
        <NavCircle forward />
        <Caret className="ml-[4px] mr-[3px] text-[#8a8080]" />
        <div className="flex h-[23px] min-w-0 flex-1 items-center border-2 border-[#d6d1d1] bg-[#bcb6b6] text-black">
          <span className="ml-[2px] mr-[9px]"><UserFolder /></span>
          <Crumb />
          <span className="mx-[9px]">Robert</span>
          <Crumb />
          <Caret className="ml-auto mr-[6px] text-[#0a0a3c]" />
          <button aria-label="Refresh" className="flex h-full w-[25px] items-center justify-center border-l border-[#5a5050]">
            <Svg>
              <path d="M0 7h3c0-2.500 1-4 3-4.500V6.500h3L4.500 11zM16 9h-3c0 2.500-1 4-3 4.500V9.500H7L11.500 5z" fill="#3b7dc9" stroke="#e5eefa" strokeWidth=".6" />
            </Svg>
          </button>
        </div>
        <div className="ml-[5px] mr-px flex h-[23px] w-[239px] shrink-0 items-center border-2 border-[#d6d1d1] bg-[#bcb6b6] pr-1">
          <input aria-label="Search folder" placeholder="Search" className="min-w-0 flex-1 bg-transparent pl-1 italic outline-none placeholder:text-[#5c5757]" />
          <Svg size={14}>
            <circle cx="10" cy="6" r="4.500" stroke="#3f6fb4" strokeWidth="1.800" />
            <path d="M7 9.500L1 15" stroke="#3f6fb4" strokeWidth="2.400" />
          </Svg>
        </div>
      </div>
    </header>
  );
}

const explorerMenu = [
  { label: "&File", width: "w-[34px]" },
  { label: "&Edit", width: "w-[36px]" },
  { label: "&View", width: "w-[41px]" },
  { label: "&Tools", width: "w-[45px]" },
  { label: "&Help", width: "w-[40px]" },
];

function ExplorerToolbars() {
  return (
    <>
      <div className="flex h-[25px] shrink-0 items-center border-b border-[#9aa0a8] bg-linear-to-b from-white via-[#dbe0f0] via-45% to-[#e9e8f6]">
        <span className="ml-1 mr-[14px] h-4 border-l border-dotted border-[#aaa]" />
        {explorerMenu.map((m) => (
          <button key={m.label} className={`${m.width} shrink-0 text-left`}>
            <Caption text={m.label} />
          </button>
        ))}
      </div>
      <div className="flex h-8 shrink-0 items-center border-b-2 border-[#07283c] bg-[linear-gradient(#8db4bd,#4f8ca0_48%,#12546f_50%,#1a6077_70%,#3f8ba0)] pl-2 text-white">
        <button className="flex w-[101px] items-center">
          <Svg>
            <path d="M1 1h7v9H1z" fill="#fff" />
            <path d="M9.500 3v8.500H4M12 5v8.500H6.500M14.500 7v8.500H9" stroke="#e8f4f8" strokeWidth="1.500" />
          </Svg>
          <span className="ml-1.5 mr-[7px]">Organize</span>
          <Caret />
        </button>
        <button className="flex items-center">
          <Svg size={14}>
            <path d="M0 1.500h3M0 4.500h3M0 7.500h3M0 10.500h3M0 13.500h3M5 1.500h3M5 4.500h3M5 7.500h3M5 10.500h3M5 13.500h3M10 1.500h6M10 4.500h6M10 7.500h6M10 10.500h6M10 13.500h6" stroke="#fff" strokeWidth="1.700" />
          </Svg>
          <span className="ml-[6px] mr-[13px]">Views</span>
          <Caret />
        </button>
        <button aria-label="Help" className="ml-auto mr-[10px] flex h-[14px] w-[14px] items-center justify-center rounded-full border border-[#c5cdf2] bg-[#3140a8] text-[11px] font-bold leading-none">
          ?
        </button>
      </div>
    </>
  );
}

function FavoriteLinks() {
  return (
    <aside className="flex w-[261px] shrink-0 flex-col border-r border-[#a9c9d9] bg-[#fcfcfc]">
      <h2 className="pl-[11px] pt-2 leading-[18px] text-[#8b8b8b]">Favorite Links</h2>
      <ul className="pl-[6px] pt-[5px]">
        {favorites.map((f) => (
          <li key={f.name}>
            <a href="#open" className="flex h-[22px] items-center gap-2 whitespace-pre text-[#2a64c0]">
              {f.icon}
              {f.name}
            </a>
          </li>
        ))}
        <li>
          <a href="#more" className="flex h-[22px] items-center gap-[7px] pl-6 text-[#2a64c0]">
            More
            <Svg size={9}>
              <path d="M1 1l6 7-6 7M8 1l6 7-6 7" stroke="#111" strokeWidth="2.500" />
            </Svg>
          </a>
        </li>
      </ul>
      <button className="mt-auto flex h-[24px] items-center justify-between border-b border-[#3a7ba8] bg-linear-to-b from-[#e6f5fd] via-[#b8e1f7] via-50% to-[#a5d9f5] pl-[11px] pr-2 text-[#153a9c]">
        Folders
        <Svg size={10}>
          <path d="M2 12l6-7 6 7" stroke="#0a1f66" strokeWidth="3" />
        </Svg>
      </button>
    </aside>
  );
}

function FileList() {
  return (
    <div className="flex min-w-0 flex-1 overflow-hidden bg-[#fcfcfc] pl-[1px]">
      <table className="w-full table-fixed self-start">
        <colgroup>
          <col className="w-[247px]" />
          <col />
        </colgroup>
        <thead>
          <tr className="h-6 text-left">
            <th className="relative border-b border-r border-[#b0d7e8] bg-linear-to-b from-[#f3fbfe] to-[#d6edf7] pl-[6px] pt-[1px] font-normal">
              Name
              <Caret className="absolute left-[119px] top-[2px] rotate-180 text-[#3a6d98]" />
            </th>
            <td className="border-b border-[#d5d5d5] bg-linear-to-b from-white to-[#f1f1f1]" />
          </tr>
        </thead>
        <tbody className="[&>tr]:h-[19px]">
          {files.map((f, i) => (
            <tr key={f.name}>
              <td className="border-r border-[#ebebeb] py-0 pl-[4px]">
                <span className={`flex h-[17px] items-center gap-[2px] border border-dotted pl-[3px] ${i === 0 ? "border-black" : "border-transparent"}`}>
                  {f.icon}
                  {f.name}
                </span>
              </td>
              <td />
            </tr>
          ))}
        </tbody>
      </table>
      <div className="flex w-4 shrink-0 flex-col items-center bg-[#ececec] pb-[7px] pt-[7px]">
        <Caret className="rotate-180 text-[#222]" />
        <div className="mt-[7px] flex h-[107px] w-[14px] flex-col items-center justify-center gap-[2px] rounded-[2px] border border-[#8f8f8f] bg-linear-to-r from-[#f5f5f5] to-[#cfcfcf]">
          <span className="h-px w-[6px] bg-[#666]" />
          <span className="h-px w-[6px] bg-[#666]" />
          <span className="h-px w-[6px] bg-[#666]" />
        </div>
        <Caret className="mt-auto text-[#222]" />
      </div>
    </div>
  );
}

function ExplorerWindow() {
  return (
    <div className="relative min-w-0 overflow-hidden whitespace-nowrap bg-black">
      <div className="flex h-[600px] flex-col">
        <ExplorerHeader />
        <ExplorerToolbars />
        <div className="flex min-h-0 flex-1">
          <FavoriteLinks />
          <FileList />
        </div>
        <div className="flex h-[55px] shrink-0 border-b border-t border-b-[#8a8a8a] border-t-[#9fb6c6] bg-linear-to-r from-[#eefbff] from-50% to-[#b4d3ee] shadow-[inset_0_4px_4px_-2px_#b4cfe0]">
          <svg width="44" height="50" viewBox="0 0 44 50" className="ml-[6px] mt-[2px]" aria-hidden="true">
            <path d="M26 34l16-2-14 12z" fill="#d9e0e2" />
            <path d="M1 2l26 2v30L11 46 1 44z" fill="#5a9c8c" />
            <path d="M1 2l8 3v40l-8-2z" fill="#86b9c9" />
            <path d="M3 8l4 1v10l-4-1z" fill="#cfe6f2" stroke="#3f7f95" />
            <path d="M11 12l7-3v35l-7 4z" fill="#efd56a" />
            <path d="M19 11l8-2v32l-8 6z" fill="#dcb843" />
            <path d="M13 13v26M21 14v24" stroke="#fbf1b8" strokeWidth="2" />
            <path d="M15 36v9M22 32v9" stroke="#fff" strokeWidth="2" />
          </svg>
          <span className="ml-[16px] pt-[6px] text-[13px]">69 items</span>
          <svg width="102" height="52" viewBox="0 0 102 52" fill="none" className="ml-auto" aria-hidden="true">
            <path d="M5 46c30-3 55-10 77-25 4-4 10-12 16-16-3 6-8 10-12 14C78 30 72 38 65 50" stroke="#e9f6fb" />
            <path d="M12 48c28-3 50-11 70-27M22 50c24-4 42-13 61-30M62 50c8-10 16-20 22-30M68 50c6-10 12-20 18-31" stroke="#f4fafd" />
            <path d="M70 34l16-18 10-12" stroke="#c9ecc0" strokeWidth="2" />
          </svg>
        </div>
        <footer className="flex h-[22px] shrink-0 items-center justify-between border-t border-white bg-[#f1eded] pl-[2px]">
          69 items
          <Svg size={10} className="self-end">
            <path d="M13 3v2M13 8v2M9 8v2M13 13v2M9 13v2M5 13v2" stroke="#aaa" strokeWidth="2" />
          </Svg>
        </footer>
      </div>
      {/* right edge of a window tucked behind the browser */}
      <div className="absolute -left-4 top-[121px] h-[94px] w-5 rounded-r-[7px] border-2 border-[#2f5357] bg-[#e4f6f6] shadow-[2px_2px_10px_3px_rgba(0,0,0,0.6)]" />
    </div>
  );
}

export default function App() {
  return (
    <div className="relative grid h-screen grid-cols-[1024fr_800fr] grid-rows-1 overflow-hidden bg-black font-[Roboto,'Open_Sans',sans-serif] text-[12px] leading-4 text-black">
      <FirefoxWindow />
      <ExplorerWindow />
      <DisplaySettings />
    </div>
  );
}
